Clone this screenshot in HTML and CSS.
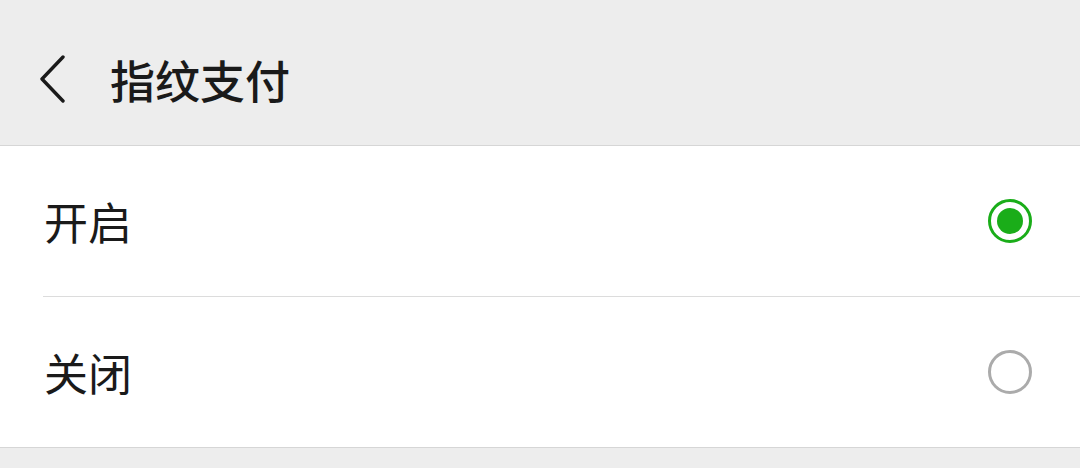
FILE: index.html
```html
<!DOCTYPE html>
<html lang="zh-CN">
	<head>
		<meta charset="UTF-8" />
		<meta name="viewport" content="width=device-width, initial-scale=1.0" />
		<title>指纹支付</title>
		<link rel="stylesheet" href="styles.css">
	</head>
	<body>
		<div class="header">
			<svg class="back" width="30" height="48" viewBox="0 0 30 48">
				<path d="M25 2 L4 24 L25 46" fill="none" stroke="#1a1a1a" stroke-width="3.4" stroke-linecap="round" stroke-linejoin="round" />
			</svg>
			<h1 class="title">指纹支付</h1>
		</div>
		<div class="list">
			<div class="row">
				<span class="label">开启</span>
				<span class="radio on"></span>
			</div>
			<div class="row">
				<span class="label">关闭</span>
				<span class="radio"></span>
			</div>
		</div>
	</body>
</html>
```

FILE: styles.css
```css
body {
	margin: 0;
	background-color: #ededed;
	font-family: "Noto Sans CJK SC", "Noto Sans", sans-serif;
	color: #1a1a1a;
}

.header {
	height: 146px;
	display: flex;
	align-items: center;
	padding-left: 38px;
	padding-top: 13px;
	box-sizing: border-box;
	border-bottom: 1px solid #d6d6d6;
}

.title {
	margin: 0 0 0 42px;
	font-size: 45px;
	font-weight: 500;
	line-height: 1;
}

.list {
	background-color: #fff;
	border-bottom: 1px solid #d6d6d6;
}

.row {
	height: 150px;
	display: flex;
	align-items: center;
	justify-content: space-between;
	margin-left: 43px;
	padding-right: 48px;
	box-sizing: border-box;
}

.row + .row {
	border-top: 1px solid #dcdcdc;
	height: 151px;
}

.label {
	font-size: 44px;
	margin-left: 1px;
}

.radio {
	width: 44px;
	height: 44px;
	border-radius: 50%;
	border: 3px solid #ababab;
	box-sizing: border-box;
	display: flex;
	align-items: center;
	justify-content: center;
}

.radio.on {
	border-color: #1aad19;
}

.radio.on::after {
	content: "";
	width: 26px;
	height: 26px;
	border-radius: 50%;
	background-color: #1aad19;
}
```
